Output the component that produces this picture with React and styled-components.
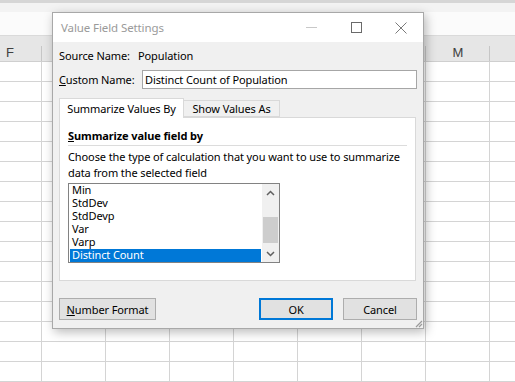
import React from "react"
import styled, { createGlobalStyle } from "styled-components"

const GlobalStyle = createGlobalStyle`
  body {
    margin: 0;
    overflow: hidden;
    font-family: "Noto Sans", "Liberation Sans", sans-serif;
  }
`

const columns = ["F", "G", "H", "I", "J", "K", "L", "M", "N"]
const rows = Array.from({ length: 16 }, (_, i) => i)
const items = ["Min", "StdDev", "StdDevp", "Var", "Varp", "Distinct Count"]

const App = () => {
  return (
    <Sheet>
      <GlobalStyle />
      <TopStrip />
      <Toolbar />
      <FormulaBar />
      <HeaderRow>
        {columns.map((c) => (
          <HeaderCell key={c}>{c}</HeaderCell>
        ))}
      </HeaderRow>
      <Grid>
        {rows.map((r) =>
          columns.map((c) => <Cell key={c + r} />)
        )}
      </Grid>

      <Dialog>
        <TitleBar>
          <Title>Value Field Settings</Title>
          <Controls>
            <Ctrl>
              <svg width="11" height="11" viewBox="0 0 11 11">
                <line x1="0" y1="5.5" x2="11" y2="5.5" stroke="#c8c8c8" strokeWidth="1" />
              </svg>
            </Ctrl>
            <Ctrl>
              <svg width="11" height="11" viewBox="0 0 11 11">
                <rect x="0.5" y="0.5" width="10" height="10" fill="none" stroke="#6a6a6a" strokeWidth="1" />
              </svg>
            </Ctrl>
            <Ctrl>
              <svg width="12" height="12" viewBox="0 0 12 12">
                <path d="M0.5 0.5 L11.5 11.5 M11.5 0.5 L0.5 11.5" stroke="#7a7a7a" strokeWidth="1" />
              </svg>
            </Ctrl>
          </Controls>
        </TitleBar>

        <Body>
          <FieldRow>
            <Label>Source Name:</Label>
            <Value>Population</Value>
          </FieldRow>
          <FieldRow $gap>
            <Label><u>C</u>ustom Name:</Label>
            <Input>Distinct Count of Population</Input>
          </FieldRow>

          <Tabs>
            <Tab $active>Summarize Values By</Tab>
            <Tab>Show Values As</Tab>
          </Tabs>
          <Panel>
            <GroupTitle><u>S</u>ummarize value field by</GroupTitle>
            <Separator />
            <Hint>
              Choose the type of calculation that you want to use to summarize
              <br />
              data from the selected field
            </Hint>
            <ListBox>
              <Items>
                {items.map((it) => (
                  <Item key={it} $selected={it === "Distinct Count"}>{it}</Item>
                ))}
              </Items>
              <ScrollBar>
                <Arrow>
                  <svg width="9" height="6" viewBox="0 0 9 6">
                    <polyline points="1,5 4.5,1.5 8,5" fill="none" stroke="#606060" strokeWidth="1.5" />
                  </svg>
                </Arrow>
                <Track>
                  <Thumb />
                </Track>
                <Arrow>
                  <svg width="9" height="6" viewBox="0 0 9 6">
                    <polyline points="1,1 4.5,4.5 8,1" fill="none" stroke="#606060" strokeWidth="1.5" />
                  </svg>
                </Arrow>
              </ScrollBar>
            </ListBox>
          </Panel>

          <Buttons>
            <Button $wide><u>N</u>umber Format</Button>
            <Spacer />
            <Button $default>OK</Button>
            <Button>Cancel</Button>
          </Buttons>
        </Body>

        <Grip>
          <svg width="8" height="8" viewBox="0 0 8 8">
            <path d="M7 1 L1 7 M7 4 L4 7" stroke="#9a9a9a" strokeWidth="1.2" />
          </svg>
        </Grip>
      </Dialog>
    </Sheet>
  )
}

export default App

const Sheet = styled.div`
  position: relative;
  width: 515px;
  height: 382px;
  overflow: hidden;
  display: flex;
  flex-direction: column;
  background: #ffffff;
`

const TopStrip = styled.div`
  height: 3px;
  background: #d6d6d6;
`

const Toolbar = styled.div`
  height: 10px;
  background: #f3f3f3;
`

const FormulaBar = styled.div`
  height: 25px;
  background: #fbfbfb;
`

const HeaderRow = styled.div`
  display: grid;
  grid-template-columns: repeat(9, 64px);
  height: 30px;
  margin-left: -22px;
  background: #e6e6e6;
  border-top: 1px solid #dadada;
  border-bottom: 1px solid #cfcfcf;
  box-sizing: border-box;
`

const HeaderCell = styled.div`
  position: relative;
  display: flex;
  align-items: center;
  justify-content: center;
  padding-top: 8px;
  font-family: "Liberation Sans", sans-serif;
  font-size: 13px;
  color: #404040;
  &::after {
    content: "";
    position: absolute;
    right: 0;
    top: 10px;
    bottom: 0;
    width: 1px;
    background: #c6c6c6;
  }
`

const Grid = styled.div`
  display: grid;
  grid-template-columns: repeat(9, 64px);
  grid-auto-rows: 20px;
  margin-left: -22px;
`

const Cell = styled.div`
  box-sizing: border-box;
  border-right: 1px solid #d4d4d4;
  border-bottom: 1px solid #d4d4d4;
`

const Dialog = styled.div`
  position: absolute;
  left: 52px;
  top: 12px;
  width: 372px;
  height: 317px;
  box-sizing: border-box;
  border: 1px solid #a8a8a8;
  background: #f0f0f0;
  box-shadow: 2px 3px 10px rgba(0, 0, 0, 0.28);
  display: flex;
  flex-direction: column;
  font-size: 11px;
  letter-spacing: -0.1px;
  color: #000;
`

const TitleBar = styled.div`
  height: 29px;
  background: #ffffff;
  display: flex;
  align-items: center;
  padding-left: 8px;
`

const Title = styled.div`
  flex: 1;
  color: #9a9a9a;
  font-size: 11.5px;
  padding-bottom: 1px;
`

const Controls = styled.div`
  display: flex;
  align-items: center;
  height: 100%;
`

const Ctrl = styled.div`
  width: 45px;
  height: 100%;
  display: flex;
  align-items: center;
  justify-content: center;
  &:last-child {
    width: 44px;
  }
`

const Body = styled.div`
  flex: 1;
  display: flex;
  flex-direction: column;
  padding: 5px 6px 0 6px;
`

const FieldRow = styled.div`
  display: flex;
  align-items: center;
  height: ${(p) => (p.$gap ? "19px" : "16px")};
  margin-top: ${(p) => (p.$gap ? "7px" : "0")};
`

const Label = styled.div`
  width: 79px;
  white-space: nowrap;
`

const Value = styled.div``

const Input = styled.div`
  flex: 1;
  height: 19px;
  margin-left: 4px;
  box-sizing: border-box;
  border: 1px solid #a6a6a6;
  background: #ffffff;
  padding-left: 2px;
  display: flex;
  align-items: center;
  white-space: nowrap;
`

const Tabs = styled.div`
  display: flex;
  align-items: flex-end;
  margin-top: 9px;
  height: 19px;
  position: relative;
  z-index: 1;
`

const Tab = styled.div`
  box-sizing: border-box;
  width: ${(p) => (p.$active ? "125px" : "96px")};
  height: ${(p) => (p.$active ? "20px" : "17px")};
  margin-bottom: ${(p) => (p.$active ? "-1px" : "0")};
  display: flex;
  align-items: center;
  justify-content: center;
  background: ${(p) => (p.$active ? "#ffffff" : "#f0f0f0")};
  border: 1px solid #d9d9d9;
  border-bottom: ${(p) => (p.$active ? "none" : "1px solid #d9d9d9")};
  border-left: ${(p) => (p.$active ? "1px solid #d9d9d9" : "none")};
  white-space: nowrap;
`

const Panel = styled.div`
  height: 164px;
  margin-right: 1px;
  box-sizing: border-box;
  border: 1px solid #d9d9d9;
  background: #ffffff;
  padding: 10px 8px 0 8px;
  display: flex;
  flex-direction: column;
`

const GroupTitle = styled.div`
  font-weight: bold;
  height: 16px;
  line-height: 16px;
`

const Separator = styled.div`
  height: 1px;
  background: #dcdcdc;
  margin-top: 1px;
`

const Hint = styled.div`
  line-height: 16px;
  margin-top: 3px;
  white-space: nowrap;
`

const ListBox = styled.div`
  margin-top: 2px;
  width: 212px;
  height: 80px;
  box-sizing: border-box;
  border: 1px solid #828282;
  display: flex;
`

const Items = styled.div`
  flex: 1;
  padding: 0 1px;
  overflow: hidden;
`

const Item = styled.div`
  height: 13px;
  line-height: 12px;
  padding-left: 2px;
  white-space: nowrap;
  background: ${(p) => (p.$selected ? "#0078d7" : "transparent")};
  color: ${(p) => (p.$selected ? "#ffffff" : "#000000")};
`

const ScrollBar = styled.div`
  width: 17px;
  background: #f0f0f0;
  display: flex;
  flex-direction: column;
`

const Arrow = styled.div`
  height: 17px;
  display: flex;
  align-items: center;
  justify-content: center;
`

const Track = styled.div`
  flex: 1;
  display: flex;
  flex-direction: column;
  justify-content: flex-end;
  padding-bottom: 2px;
`

const Thumb = styled.div`
  height: 26px;
  margin: 0 1px;
  background: #cdcdcd;
`

const Buttons = styled.div`
  display: flex;
  margin-top: 17px;
  gap: 10px;
`

const Spacer = styled.div`
  flex: 1;
`

const Button = styled.div`
  width: ${(p) => (p.$wide ? "97px" : "74px")};
  height: 22px;
  box-sizing: border-box;
  border: ${(p) => (p.$default ? "2px solid #0078d7" : "1px solid #adadad")};
  background: #e1e1e1;
  display: flex;
  align-items: center;
  justify-content: center;
  white-space: nowrap;
`

const Grip = styled.div`
  position: absolute;
  right: 0;
  bottom: 0;
  width: 8px;
  height: 8px;
  display: flex;
`
